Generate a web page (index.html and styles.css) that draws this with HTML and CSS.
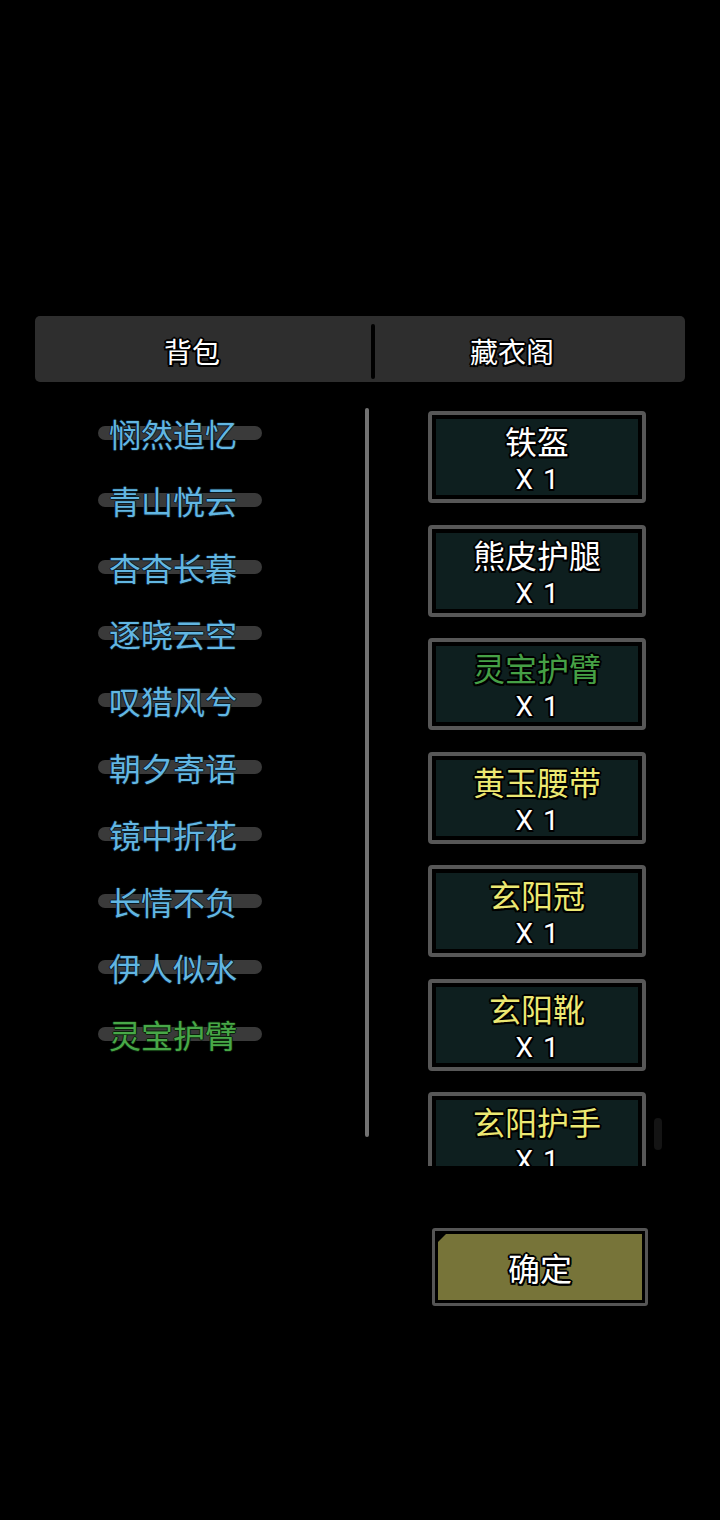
FILE: index.html
```html
<!DOCTYPE html>
<html lang="zh-CN">
<head>
<meta charset="utf-8">
<title>藏衣阁</title>
<link rel="stylesheet" href="styles.css">
</head>
<body>
<div class="page">
  <div class="tabs">
    <div class="tab tab-left">背包</div>
    <div class="tab-divider"></div>
    <div class="tab tab-right">藏衣阁</div>
  </div>

  <div class="content">
    <div class="bag">
      <div class="bag-item">悯然追忆</div>
      <div class="bag-item">青山悦云</div>
      <div class="bag-item">杳杳长暮</div>
      <div class="bag-item">逐晓云空</div>
      <div class="bag-item">叹猎风兮</div>
      <div class="bag-item">朝夕寄语</div>
      <div class="bag-item">镜中折花</div>
      <div class="bag-item">长情不负</div>
      <div class="bag-item">伊人似水</div>
      <div class="bag-item green">灵宝护臂</div>
    </div>
    <div class="divider"></div>
    <div class="wardrobe">
      <div class="card"><div class="card-name">铁盔</div><div class="card-count">X 1</div></div>
      <div class="card"><div class="card-name">熊皮护腿</div><div class="card-count">X 1</div></div>
      <div class="card"><div class="card-name green">灵宝护臂</div><div class="card-count">X 1</div></div>
      <div class="card"><div class="card-name yellow">黄玉腰带</div><div class="card-count">X 1</div></div>
      <div class="card"><div class="card-name yellow">玄阳冠</div><div class="card-count">X 1</div></div>
      <div class="card"><div class="card-name yellow">玄阳靴</div><div class="card-count">X 1</div></div>
      <div class="card"><div class="card-name yellow">玄阳护手</div><div class="card-count">X 1</div></div>
    </div>
    <div class="scrollbar"></div>
  </div>

  <div class="actions">
    <div class="confirm">
      <div class="confirm-fill">确定</div>
    </div>
  </div>
</div>
</body>
</html>
```

FILE: styles.css
```css
html, body {
  margin: 0;
  padding: 0;
  background: #000;
}

body {
  width: 720px;
  height: 1520px;
  overflow: hidden;
  font-family: "Noto Sans CJK SC", "Noto Sans", sans-serif;
  color: #fff;
}

.page {
  padding-top: 316px;
}

/* Tabs */
.tabs {
  margin: 0 35px;
  height: 66px;
  background: #2e2e2e;
  border-radius: 5px;
  display: flex;
  align-items: center;
}

.tab {
  font-size: 28px;
  line-height: 66px;
  padding-top: 3px;
  text-align: center;
  color: #fff;
  text-shadow:
    -2px 0 0 #000, 2px 0 0 #000, 0 -2px 0 #000, 0 2px 0 #000,
    -1.5px -1.5px 0 #000, 1.5px -1.5px 0 #000, -1.5px 1.5px 0 #000, 1.5px 1.5px 0 #000;
}

.tab-left {
  width: 336px;
  padding-right: 22px;
  box-sizing: border-box;
}

.tab-right {
  width: 310px;
  padding-right: 36px;
  box-sizing: border-box;
}

.tab-divider {
  width: 4px;
  height: 55px;
  background: #000;
  border-radius: 2px;
  margin-top: 4px;
}

/* Content */
.content {
  position: relative;
  display: flex;
  margin-top: 26px;
  height: 758px;
}

.bag {
  width: 365px;
  box-sizing: border-box;
  padding-left: 98px;
  padding-top: 18px;
  display: flex;
  flex-direction: column;
  gap: 52.8px;
}

.bag-item {
  width: 164px;
  height: 14px;
  border-radius: 7px;
  background: #3a3a3a;
  box-sizing: border-box;
  padding-left: 11px;
  font-size: 32px;
  line-height: 14px;
  white-space: nowrap;
  color: #62b6e2;
  text-shadow:
    -1px 0 0 #0a1a22, 1px 0 0 #0a1a22, 0 -1px 0 #0a1a22, 0 1px 0 #0a1a22;
}

.bag-item.green {
  color: #48a848;
  text-shadow:
    -1px 0 0 #0a200a, 1px 0 0 #0a200a, 0 -1px 0 #0a200a, 0 1px 0 #0a200a;
}

.divider {
  width: 4px;
  height: 729px;
  background: #727272;
  border-radius: 2px;
}

.wardrobe {
  margin-left: 59px;
  margin-top: 3px;
  width: 218px;
  height: 755px;
  overflow: hidden;
  display: flex;
  flex-direction: column;
  gap: 21.5px;
}

.card {
  flex: none;
  height: 92px;
  box-sizing: border-box;
  border: 4px solid #575757;
  border-radius: 4px;
  background: #0e1f1f;
  box-shadow: inset 0 0 0 4px #000;
  display: flex;
  flex-direction: column;
  align-items: center;
  padding-top: 5px;
}

.card-name,
.card-count {
  text-shadow:
    -2px 0 0 #000, 2px 0 0 #000, 0 -2px 0 #000, 0 2px 0 #000,
    -1.5px -1.5px 0 #000, 1.5px -1.5px 0 #000, -1.5px 1.5px 0 #000, 1.5px 1.5px 0 #000;
}

.card-name {
  font-size: 32px;
  line-height: 40px;
  color: #fff;
}

.card-name.green {
  color: #46a046;
}

.card-name.yellow {
  color: #ece872;
}

.card-count {
  font-family: "Roboto", "Noto Sans", sans-serif;
  font-size: 28px;
  line-height: 40px;
  word-spacing: 3px;
  color: #fff;
}

.scrollbar {
  position: absolute;
  left: 654px;
  top: 710px;
  width: 8px;
  height: 32px;
  border-radius: 4px;
  background: #141414;
}

/* Confirm */
.actions {
  margin-top: 62px;
  padding-left: 432px;
}

.confirm {
  width: 216px;
  height: 78px;
  box-sizing: border-box;
  border: 3px solid #555;
  border-radius: 3px;
  background: #000;
  padding: 3px;
}

.confirm-fill {
  height: 100%;
  background: #777439;
  clip-path: polygon(8px 0, 100% 0, 100% 100%, 0 100%, 0 8px);
  display: flex;
  align-items: center;
  justify-content: center;
  font-size: 32px;
  color: #fff;
  text-shadow:
    -2px 0 0 #000, 2px 0 0 #000, 0 -2px 0 #000, 0 2px 0 #000,
    -1.5px -1.5px 0 #000, 1.5px -1.5px 0 #000, -1.5px 1.5px 0 #000, 1.5px 1.5px 0 #000;
}
```
